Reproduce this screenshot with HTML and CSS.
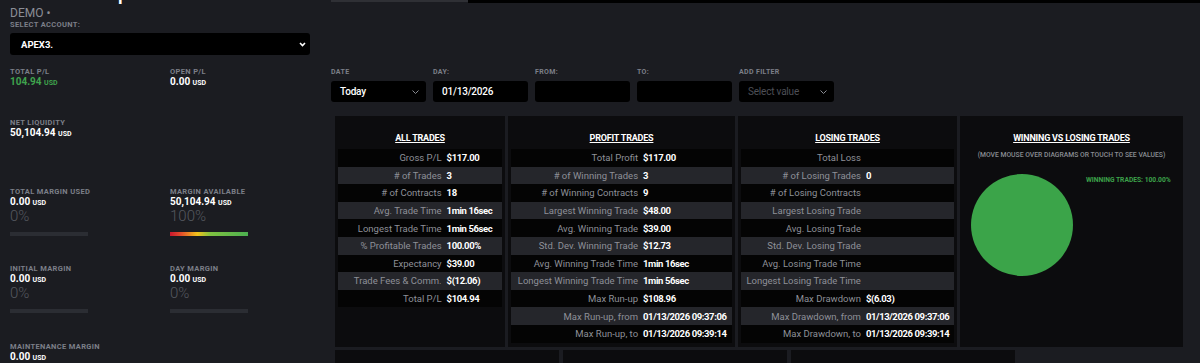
FILE: index.html
```html
<!DOCTYPE html>
<html lang="en">
<head>
    <meta charset="UTF-8">
    <meta name="viewport" content="width=device-width, initial-scale=1.0">
    <title>Account Report</title>
    <link rel="stylesheet" href="styles.css">
</head>
<body>
<div class="page">
    <!-- left column: account summary -->
    <aside class="account">
        <h1 class="page-title">Account Report</h1>
        <div class="mode">DEMO &bull;</div>
        <div class="caps">Select account:</div>
        <div class="account-select">
            <span>APEX3.</span>
            <svg class="chev" width="7" height="5" viewBox="0 0 7 5"><path d="M1 1l2.5 2.5L6 1" fill="none" stroke="#fff" stroke-width="1.6"/></svg>
        </div>

        <div class="stats">
            <div class="stat">
                <div class="caps">Total P/L</div>
                <div class="amount up">104.94 <small>USD</small></div>
            </div>
            <div class="stat">
                <div class="caps">Open P/L</div>
                <div class="amount">0.00 <small>USD</small></div>
            </div>
            <div class="stat">
                <div class="caps">Net Liquidity</div>
                <div class="amount">50,104.94 <small>USD</small></div>
            </div>
            <div class="stat"></div>
            <div class="stat">
                <div class="caps">Total Margin Used</div>
                <div class="amount">0.00 <small>USD</small></div>
                <div class="pct">0%</div>
                <div class="meter"></div>
            </div>
            <div class="stat">
                <div class="caps">Margin Available</div>
                <div class="amount">50,104.94 <small>USD</small></div>
                <div class="pct">100%</div>
                <div class="meter full"></div>
            </div>
            <div class="stat">
                <div class="caps">Initial Margin</div>
                <div class="amount">0.00 <small>USD</small></div>
                <div class="pct">0%</div>
                <div class="meter"></div>
            </div>
            <div class="stat">
                <div class="caps">Day Margin</div>
                <div class="amount">0.00 <small>USD</small></div>
                <div class="pct">0%</div>
                <div class="meter"></div>
            </div>
            <div class="stat">
                <div class="caps">Maintenance Margin</div>
                <div class="amount">0.00 <small>USD</small></div>
            </div>
        </div>
    </aside>

    <main class="report">
        <div class="tabs">
            <div class="tab"></div>
            <div class="tab-rest"></div>
        </div>

        <div class="filters">
            <div class="field">
                <div class="caps">Date</div>
                <div class="input">Today
                    <svg class="chev" width="7" height="4" viewBox="0 0 7 4"><path d="M.5 .5l3 3 3-3" fill="none" stroke="#8a8c93" stroke-width="1"/></svg>
                </div>
            </div>
            <div class="field">
                <div class="caps">Day:</div>
                <div class="input">01/13/2026</div>
            </div>
            <div class="field">
                <div class="caps">From:</div>
                <div class="input"></div>
            </div>
            <div class="field">
                <div class="caps">To:</div>
                <div class="input"></div>
            </div>
            <div class="field">
                <div class="caps">Add filter</div>
                <div class="input placeholder">Select value
                    <svg class="chev" width="7" height="4" viewBox="0 0 7 4"><path d="M.5 .5l3 3 3-3" fill="none" stroke="#8a8c93" stroke-width="1"/></svg>
                </div>
            </div>
        </div>

        <div class="cards">
            <div class="card">
                <h3>All Trades</h3>
                <table class="stats-table">
                    <tr><td>Gross P/L</td><td>$117.00</td></tr>
                    <tr><td># of Trades</td><td>3</td></tr>
                    <tr><td># of Contracts</td><td>18</td></tr>
                    <tr><td>Avg. Trade Time</td><td>1min 16sec</td></tr>
                    <tr><td>Longest Trade Time</td><td>1min 56sec</td></tr>
                    <tr><td>% Profitable Trades</td><td>100.00%</td></tr>
                    <tr><td>Expectancy</td><td>$39.00</td></tr>
                    <tr><td>Trade Fees &amp; Comm.</td><td>$(12.06)</td></tr>
                    <tr><td>Total P/L</td><td>$104.94</td></tr>
                </table>
            </div>
            <div class="card">
                <h3>Profit Trades</h3>
                <table class="stats-table">
                    <tr><td>Total Profit</td><td>$117.00</td></tr>
                    <tr><td># of Winning Trades</td><td>3</td></tr>
                    <tr><td># of Winning Contracts</td><td>9</td></tr>
                    <tr><td>Largest Winning Trade</td><td>$48.00</td></tr>
                    <tr><td>Avg. Winning Trade</td><td>$39.00</td></tr>
                    <tr><td>Std. Dev. Winning Trade</td><td>$12.73</td></tr>
                    <tr><td>Avg. Winning Trade Time</td><td>1min 16sec</td></tr>
                    <tr><td>Longest Winning Trade Time</td><td>1min 56sec</td></tr>
                    <tr><td>Max Run-up</td><td>$108.96</td></tr>
                    <tr><td>Max Run-up, from</td><td>01/13/2026 09:37:06</td></tr>
                    <tr><td>Max Run-up, to</td><td>01/13/2026 09:39:14</td></tr>
                </table>
            </div>
            <div class="card">
                <h3>Losing Trades</h3>
                <table class="stats-table">
                    <tr><td>Total Loss</td><td></td></tr>
                    <tr><td># of Losing Trades</td><td>0</td></tr>
                    <tr><td># of Losing Contracts</td><td></td></tr>
                    <tr><td>Largest Losing Trade</td><td></td></tr>
                    <tr><td>Avg. Losing Trade</td><td></td></tr>
                    <tr><td>Std. Dev. Losing Trade</td><td></td></tr>
                    <tr><td>Avg. Losing Trade Time</td><td></td></tr>
                    <tr><td>Longest Losing Trade Time</td><td></td></tr>
                    <tr><td>Max Drawdown</td><td>$(6.03)</td></tr>
                    <tr><td>Max Drawdown, from</td><td>01/13/2026 09:37:06</td></tr>
                    <tr><td>Max Drawdown, to</td><td>01/13/2026 09:39:14</td></tr>
                </table>
            </div>
            <div class="card chart">
                <h3>Winning vs Losing Trades</h3>
                <p class="hint">(Move mouse over diagrams or touch to see values)</p>
                <div class="pie-row">
                    <div class="pie"></div>
                    <div class="legend">Winning trades: 100.00%</div>
                </div>
            </div>
        </div>

        <div class="cards lower">
            <div class="card"></div>
            <div class="card"></div>
            <div class="card"></div>
        </div>
    </main>
</div>
</body>
</html>
```

FILE: styles.css
```css
* {
    box-sizing: border-box;
}

body {
    margin: 0;
    height: 363px;
    overflow: hidden;
    background: #1b1c21;
    color: #fff;
    font-family: Roboto, "Liberation Sans", sans-serif;
}

.page {
    display: flex;
}

/* left column */
.account {
    flex: none;
    width: 320px;
    padding: 0 10px;
}

.page-title {
    margin: -18px 0 0;
    font-size: 21px;
    line-height: 22px;
    font-weight: 500;
    white-space: nowrap;
}

.mode {
    margin-top: 2px;
    font-size: 12px;
    line-height: 14px;
    color: #8b8e96;
}

.caps {
    font-size: 7.5px;
    line-height: 9px;
    font-weight: 700;
    letter-spacing: 0.35px;
    text-transform: uppercase;
    color: #7c7f88;
}

.account-select {
    margin-top: 4px;
    height: 22px;
    display: flex;
    align-items: center;
    justify-content: space-between;
    padding: 0 4px 0 11px;
    background: #000;
    border-radius: 3px;
    font-size: 9.5px;
    font-weight: 700;
}

.stats {
    margin-top: 12px;
    display: grid;
    grid-template-columns: 160px 160px;
    grid-template-rows: 51px 69px 77px 78px auto;
}

.amount {
    font-size: 10px;
    line-height: 12px;
    font-weight: 700;
}

.amount small {
    font-size: 7px;
    font-weight: 700;
}

.amount.up {
    color: #3fa34d;
}

.pct {
    font-size: 15px;
    line-height: 14px;
    font-weight: 300;
    color: #55585f;
}

.meter {
    margin-top: 9px;
    width: 78px;
    height: 4px;
    background: #2b2d33;
}

.meter.full {
    background: linear-gradient(to right, #c8162e 0%, #e4502a 15%, #f2c21b 35%, #7fc241 52%, #4cb050 100%);
}

/* right side */
.report {
    flex: 1;
    padding-left: 11px;
}

.tabs {
    display: flex;
    height: 3px;
}

.tab {
    width: 137px;
    height: 2px;
    background: #2f3035;
}

.tab-rest {
    flex: 1;
    background: #000;
}

.filters {
    margin-top: 65px;
    display: flex;
    gap: 7px;
}

.field {
    width: 95px;
}

.field .caps {
    font-size: 7px;
    margin-bottom: 4px;
}

.input {
    height: 21px;
    display: flex;
    align-items: center;
    justify-content: space-between;
    padding: 0 7px 0 9px;
    background: #000;
    border-radius: 3px;
    font-size: 10px;
    font-weight: 500;
    letter-spacing: -0.2px;
}

.input.placeholder {
    color: #4d4f56;
    font-weight: 400;
}

.cards {
    margin: 14px 0 0 4px;
    display: grid;
    grid-template-columns: 170px 227px 219px 223px;
    column-gap: 3px;
    height: 231px;
}

.card {
    padding: 16px 3px 4px;
    background: #0c0c0e;
}

.card h3 {
    margin: 0 0 5px;
    text-align: center;
    font-size: 9px;
    line-height: 12px;
    font-weight: 700;
    letter-spacing: -0.2px;
    text-decoration: underline;
    text-transform: uppercase;
}

.stats-table {
    width: 100%;
    border-collapse: collapse;
    font-size: 9.5px;
}

.stats-table td {
    height: 17.6px;
    padding: 0 2px;
    white-space: nowrap;
}

.stats-table tr:nth-child(odd) {
    background: #040404;
}

.stats-table tr:nth-child(even) {
    background: #25262b;
}

.stats-table td:first-child {
    text-align: right;
    color: #8e9098;
}

.stats-table td:last-child {
    padding-left: 3px;
    font-weight: 700;
    letter-spacing: -0.4px;
}

.hint {
    margin: 7px 0 0;
    text-align: center;
    font-size: 6.8px;
    line-height: 8px;
    font-weight: 500;
    text-transform: uppercase;
    color: #8a8c93;
}

.pie-row {
    margin-top: 15px;
    display: flex;
    align-items: flex-start;
}

.pie {
    flex: none;
    margin-left: 8px;
    width: 102px;
    height: 102px;
    border-radius: 50%;
    background: #3ba449;
}

.legend {
    margin: 2px 0 0 13px;
    font-size: 6.7px;
    line-height: 8px;
    font-weight: 700;
    text-transform: uppercase;
    color: #3ca24a;
}

.cards.lower {
    margin-top: 3px;
    grid-template-columns: 224px 224px 224px;
    column-gap: 4px;
    height: 40px;
}
```
